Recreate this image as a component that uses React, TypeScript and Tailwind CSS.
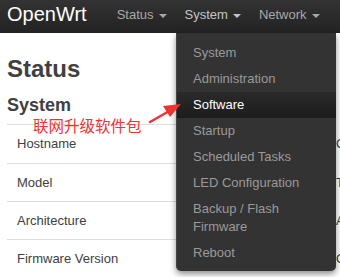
import React from 'react';

// OpenWrt LuCI status page with the System dropdown open and a red annotation

const FONT = { fontFamily: '"Liberation Sans", Arial, sans-serif' };

const navItems = ['Status', 'System', 'Network'];

const menuItems = [
  'System',
  'Administration',
  'Software',
  'Startup',
  'Scheduled Tasks',
  'LED Configuration',
  'Backup / Flash Firmware',
  'Reboot',
];

const rows = [
  { label: 'Hostname', value: 'OpenWrt' },
  { label: 'Model', value: 'TP-LINK TL-WR703N' },
  { label: 'Architecture', value: 'Atheros AR9330' },
  { label: 'Firmware Version', value: 'OpenWrt Barrier Breaker' },
];

function Caret() {
  return <span className="inline-block ml-[5px] mt-[2px] border-x-4 border-t-4 border-x-transparent border-t-current" />;
}

export default function App() {
  return (
    <div className="relative w-[340px] h-[277px] overflow-hidden bg-white" style={FONT}>
      {/* Top bar */}
      <div className="h-[33px] bg-gradient-to-b from-[#333333] to-[#222222] flex items-start pt-[3px]">
        <span className="ml-[7px] text-[20px] leading-[22px] text-white">OpenWrt</span>
        <nav className="flex ml-[30px] mt-[4px] gap-[18px]">
          {navItems.map((n) => (
            <span
              key={n}
              className={`flex items-center text-[13px] leading-[16px] ${n === 'System' ? 'text-[#c4c4c4]' : 'text-[#a8a8a8]'}`}
            >
              {n}
              <Caret />
            </span>
          ))}
        </nav>
      </div>

      {/* Page content */}
      <div className="px-[7px]">
        <h2 className="mt-[23px] text-[24px] leading-[26px] font-bold text-[#404040]">Status</h2>
        <h3 className="mt-[12px] text-[18px] leading-[22px] font-bold text-[#404040]">System</h3>
        <div className="mt-[8px] border-t border-[#dddddd]">
          {rows.map((r, i) => (
            <div
              key={r.label}
              className={`flex ${i === 0 ? 'h-[39px]' : 'h-[38px]'} items-center border-b border-[#dddddd] text-[13px] text-[#404040] whitespace-nowrap`}
            >
              <span className="w-[329px] shrink-0 pl-[10px]">{r.label}</span>
              <span>{r.value}</span>
            </div>
          ))}
        </div>
      </div>

      {/* System dropdown */}
      <ul className="absolute left-[176px] top-[33px] w-[160px] pt-[7px] pb-[5px] bg-[#333333] rounded-b-[5px] shadow-[0_3px_6px_rgba(0,0,0,0.45)] border-l border-[#444]">
        {menuItems.map((m) => (
          <li
            key={m}
            className={`px-[16px] py-[4px] text-[13px] leading-[18px] ${
              m === 'Software' ? 'bg-gradient-to-b from-[#2a2a2a] to-[#1c1c1c] text-white' : 'text-[#9a9a9a]'
            }`}
          >
            {m}
          </li>
        ))}
      </ul>

      {/* Annotation */}
      <span className="absolute left-[33px] top-[116px] text-[15.5px] leading-[18px] text-[#ee3333]" style={{ fontFamily: '"Noto Sans CJK SC", sans-serif' }}>
        联网升级软件包
      </span>
      <svg className="absolute left-0 top-0" width="340" height="277" viewBox="0 0 340 277">
        <path d="M150 122 L171 110" stroke="#ee3333" strokeWidth="2.5" strokeLinecap="round" />
        <path d="M181 104 L163 106 L170 117 Z" fill="#ee3333" />
      </svg>
    </div>
  );
}
